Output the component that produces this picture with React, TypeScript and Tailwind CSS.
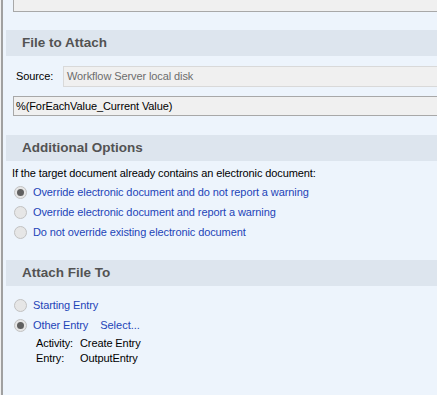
import React from 'react';

const font = { fontFamily: '"Liberation Sans", Arial, sans-serif' };

function Header({ title }: { title: string }) {
  return (
    <div className="ml-[3px] h-[26px] bg-[#dde5ee] flex items-center pl-[16px]">
      <span className="text-[13.5px] font-bold text-[#535353]">{title}</span>
    </div>
  );
}

function Radio({ checked, label, extra }: { checked?: boolean; label: string; extra?: string }) {
  return (
    <div className="flex items-center h-[20px] pl-[11px]">
      <span className="w-[13px] h-[13px] rounded-full border border-[#c2c2c2] bg-[#e6e6e6] flex items-center justify-center">
        {checked && <span className="w-[7px] h-[7px] rounded-full bg-[#606060]" />}
      </span>
      <span className="ml-[6px] text-[11px] text-[#1d44b8] tracking-[-0.1px]">{label}</span>
      {extra && <span className="ml-[12px] text-[11px] text-[#1d44b8]">{extra}</span>}
    </div>
  );
}

export default function App() {
  return (
    <div className="w-[437px] h-[395px] flex bg-[#edf4fc] overflow-hidden" style={font}>
      <div className="w-[1px] bg-[#f0f0f0]" />
      <div className="w-[2px] bg-[#a0a0a0]" />
      <div className="flex-1 flex flex-col">
        <div className="ml-[10px] h-[12px] bg-[#f0f0f0] border-l border-b border-[#a8a8a8]" />

        <div className="mt-[18px]">
          <Header title="File to Attach" />
        </div>
        <div className="mt-[10px] flex items-center pl-[13px]">
          <span className="text-[11px] text-black w-[47px] tracking-[-0.1px]">Source:</span>
          <div className="flex-1 h-[21px] bg-[#f0f0f0] border border-[#d9d9d9] border-r-0 flex items-center pl-[3px] text-[11px] text-[#6d6d6d] tracking-[-0.1px]">
            Workflow Server local disk
          </div>
        </div>
        <div className="mt-[9px] ml-[10px] h-[20px] bg-[#f0f0f0] border border-[#a8a8a8] border-r-0 flex items-center pl-[2px] text-[11px] text-black tracking-[-0.1px]">
          %(ForEachValue_Current Value)
        </div>

        <div className="mt-[19px]">
          <Header title="Additional Options" />
        </div>
        <div className="mt-[3px] pl-[9px] text-[11px] text-black h-[18px] flex items-center tracking-[-0.1px]">
          If the target document already contains an electronic document:
        </div>
        <Radio checked label="Override electronic document and do not report a warning" />
        <Radio label="Override electronic document and report a warning" />
        <Radio label="Do not override existing electronic document" />

        <div className="mt-[18px]">
          <Header title="Attach File To" />
        </div>
        <div className="mt-[9px]">
          <Radio label="Starting Entry" />
          <Radio checked label="Other Entry" extra="Select..." />
        </div>
        <div className="pl-[33px] text-[11px] text-black tracking-[-0.1px] leading-[15px] mt-[1px]">
          <div className="flex">
            <span className="w-[44px] shrink-0">Activity:</span>
            <span>Create Entry</span>
          </div>
          <div className="flex">
            <span className="w-[44px] shrink-0">Entry:</span>
            <span>OutputEntry</span>
          </div>
        </div>
      </div>
    </div>
  );
}
